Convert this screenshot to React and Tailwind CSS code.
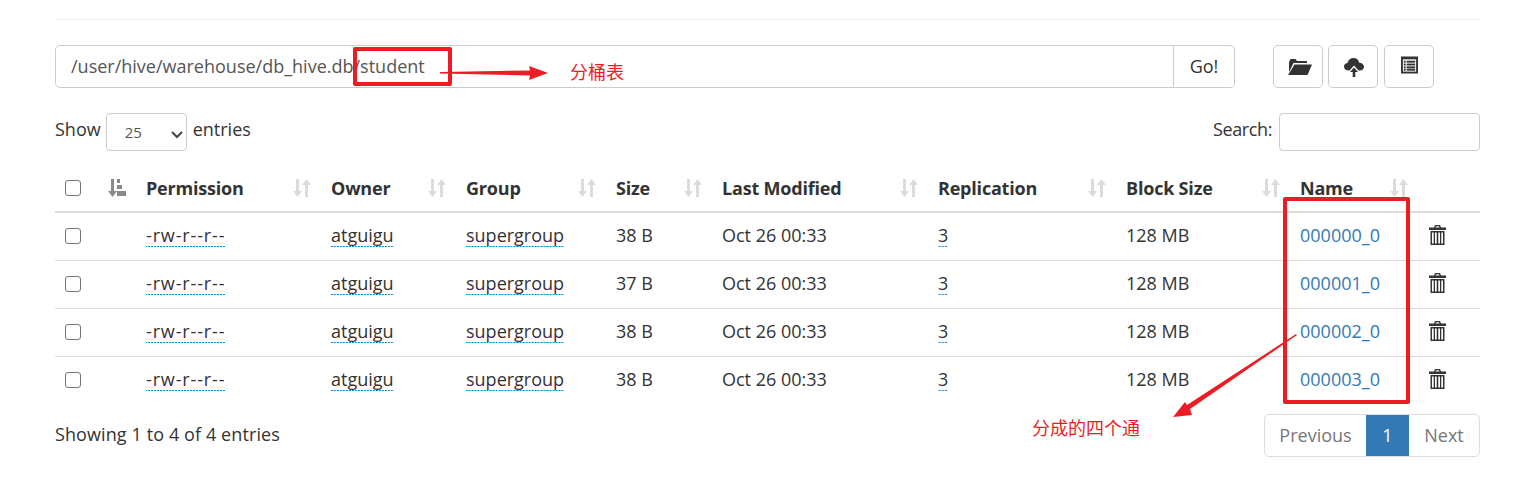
const FONT = "font-['Open_Sans','Noto_Sans_CJK_SC',sans-serif]";

const rows = [
  { size: "38 B", name: "000000_0" },
  { size: "37 B", name: "000001_0" },
  { size: "38 B", name: "000002_0" },
  { size: "38 B", name: "000003_0" },
];

const columns = [
  { label: "Permission", width: "w-[185px]" },
  { label: "Owner", width: "w-[135px]" },
  { label: "Group", width: "w-[150px]" },
  { label: "Size", width: "w-[106px]" },
  { label: "Last Modified", width: "w-[216px]" },
  { label: "Replication", width: "w-[188px]" },
  { label: "Block Size", width: "w-[174px]" },
  { label: "Name", width: "w-[128px]" },
];

function SortIcon({ className = "text-[#dcdcdc]" }) {
  return (
    <svg width="18" height="20" viewBox="0 0 18 20" className={className} fill="currentColor">
      <path d="M3 1h3v12h3l-4.500 6L0 13h3z" />
      <path d="M12 19h3V7h3l-4.500-6L9 7h3z" />
    </svg>
  );
}

function SortAttrIcon() {
  return (
    <svg width="18" height="20" viewBox="0 0 18 20" className="text-[#8a8a8a]" fill="currentColor">
      <path d="M3 1h3v12h3l-4.500 6L0 13h3z" />
      <rect x="9" y="1" width="3" height="4" />
      <rect x="9" y="7" width="5" height="4" />
      <rect x="9" y="13" width="9" height="5" />
    </svg>
  );
}

function FolderIcon() {
  return (
    <svg width="24" height="18" viewBox="0 0 24 18" fill="#333" className="ml-[3px]">
      <path d="M1 4 2.500 1h5L9 3h10v2H5.500L1 14z" />
      <path d="M6.500 6.500H24L19.500 17H0z" />
    </svg>
  );
}

function CloudUploadIcon() {
  return (
    <svg width="20" height="20" viewBox="0 0 20 20" fill="#333" className="ml-px">
      <path d="M5 13.500C2 13.500 0 12 0 9.500 0 7.300 1.700 6 3.500 6 4.300 2.800 6.700 1 9.500 1c3 0 5.200 2 5.800 4.800 2.700 0 4.700 1.700 4.700 4 0 2.300-1.800 3.700-4.300 3.700h-1.200L10 8.500 5.500 13.500z" />
      <path d="M10 10.500 14 15h-2.700v5H8.700v-5H6z" />
    </svg>
  );
}

function ListIcon() {
  return (
    <svg width="17" height="18" viewBox="0 0 18 18" className="ml-px -mt-[3px]">
      <rect x="0" y="0" width="18" height="18" fill="#333" />
      <rect x="2" y="3" width="14" height="13" fill="#fff" />
      <g fill="#333">
        <rect x="3" y="4.500" width="2" height="2" />
        <rect x="6" y="4.500" width="9" height="2" />
        <rect x="3" y="7.500" width="2" height="2" />
        <rect x="6" y="7.500" width="9" height="2" />
        <rect x="3" y="10.500" width="2" height="2" />
        <rect x="6" y="10.500" width="9" height="2" />
        <rect x="3" y="13" width="2" height="2" />
        <rect x="6" y="13" width="9" height="2" />
      </g>
    </svg>
  );
}

function TrashIcon() {
  return (
    <svg width="17" height="20" viewBox="0 0 17 20" fill="#333" className="ml-px -mt-[3px]">
      <path d="M6 0h5l1 2.500h5V5H0V2.500h5zM7 1.200 6.500 2.500h4L10 1.200z" />
      <path d="M1.500 6h14v14h-14zM3 7.500v11h1.700v-11zM6 7.500v11h1.700v-11zM9.300 7.500v11H11v-11zM12.300 7.500v11H14v-11z" fillRule="evenodd" />
    </svg>
  );
}

function Check() {
  return <span className="block w-4 h-4 rounded-[3px] border border-[#767676] bg-white" />;
}

function Dotted({ children, className = "" }) {
  return (
    <span className={`bg-[linear-gradient(to_right,#0088cc_67%,transparent_67%)] bg-[length:3px_1px] bg-repeat-x bg-bottom ${className}`}>
      {children}
    </span>
  );
}

function IconButton({ children }) {
  return (
    <button className="w-[50px] h-[43px] flex items-center justify-center border border-[#cccccc] rounded-[5px] bg-white">
      {children}
    </button>
  );
}

export default function App() {
  return (
    <div className={`relative h-[485px] overflow-hidden bg-white pl-[55px] pr-[37px] pt-[19px] text-[18px] leading-[26px] text-[#333] ${FONT}`}>
      <div className="border-t border-[#eeeeee]" />

      <div className="mt-[25px] flex items-start">
        <div className="flex w-[1180px] h-[43px]">
          <div className="flex-1 flex items-center pl-[15px] pb-[2px] border border-[#cccccc] rounded-l-[5px] text-[#555]">
            /user/hive/warehouse/db_hive.db/student
          </div>
          <button className="w-[61px] pb-[2px] border border-l-0 border-[#cccccc] rounded-r-[5px]">Go!</button>
        </div>
        <div className="flex ml-[38px]">
          <IconButton><FolderIcon /></IconButton>
          <div className="ml-[5px]"><IconButton><CloudUploadIcon /></IconButton></div>
          <div className="ml-[6px]"><IconButton><ListIcon /></IconButton></div>
        </div>
      </div>

      <div className="mt-[25px] flex items-center justify-between h-[38px]">
        <div className="flex items-center gap-[5px]">
          <span className="-mt-[6px]">Show</span>
          <div className="relative w-[81px] h-[38px] flex items-center pl-[18px] border border-[#cccccc] rounded-[4px] text-[15px] text-[#555]">
            25
            <svg width="12" height="8" viewBox="0 0 12 8" className="absolute right-[3px] top-[17px]" fill="none" stroke="#444" strokeWidth="2">
              <path d="M1 1l5 5 5-5" />
            </svg>
          </div>
          <span className="-mt-[6px] ml-px">entries</span>
        </div>
        <div className="flex items-center gap-[7px]">
          <span className="-mt-[6px] tracking-[-0.4px]">Search:</span>
          <div className="w-[201px] h-[38px] border border-[#cccccc] rounded-[4px]" />
        </div>
      </div>

      <table className="mt-[14px] w-[1425px] table-fixed border-collapse">
        <thead>
          <tr className="h-[47px] border-b-2 border-[#dddddd]">
            <th className="w-[43px] pl-[10px] text-left align-middle"><Check /></th>
            <th className="w-[38px] pl-[10px] text-left align-middle"><SortAttrIcon /></th>
            {columns.map((col) => (
              <th key={col.label} className={`${col.width} pl-[10px] pr-[10px] text-left font-bold`}>
                <div className="flex items-center justify-between">
                  <span className="tracking-[-0.2px]">{col.label}</span>
                  <SortIcon />
                </div>
              </th>
            ))}
            <th className="w-[62px]" />
          </tr>
        </thead>
        <tbody>
          {rows.map((row) => (
            <tr key={row.name} className="h-[48px] border-b border-[#dddddd] last:border-b-0">
              <td className="pl-[10px]"><Check /></td>
              <td />
              <td className="pl-[10px] pb-[2px]"><Dotted className="tracking-[0.85px]">-rw-r--r--</Dotted></td>
              <td className="pl-[10px] pb-[2px]"><Dotted>atguigu</Dotted></td>
              <td className="pl-[10px] pb-[2px]"><Dotted>supergroup</Dotted></td>
              <td className="pl-[10px] pb-[2px]">{row.size}</td>
              <td className="pl-[10px] pb-[2px]">Oct 26 00:33</td>
              <td className="pl-[10px] pb-[2px]"><Dotted>3</Dotted></td>
              <td className="pl-[10px] pb-[2px]">128 MB</td>
              <td className="pl-[10px] pb-[2px] text-[#337ab7]">{row.name}</td>
              <td className="pl-[10px]"><TrashIcon /></td>
            </tr>
          ))}
        </tbody>
      </table>

      <div className="mt-[10px] flex items-start justify-between">
        <div className="mt-[7px] tracking-[0.1px]">Showing 1 to 4 of 4 entries</div>
        <div className="flex h-[43px] items-stretch border border-[#dddddd] rounded-[5px] overflow-hidden text-[#777]">
          <span className="w-[101px] flex items-center justify-center pb-px">Previous</span>
          <span className="w-[43px] flex items-center justify-center pb-px bg-[#337ab7] text-white">1</span>
          <span className="w-[70px] flex items-center justify-center pb-px">Next</span>
        </div>
      </div>

      {/* hand drawn annotations on top of the page */}
      <div className="absolute left-[353px] top-[47px] w-[99px] h-[39px] border-[4px] border-[#ed1c24] rounded-[2px]" />
      <div className="absolute left-[1283px] top-[197px] w-[127px] h-[207px] border-[4px] border-[#ed1c24] rounded-[2px]" />
      <span className="absolute left-[570px] top-[58px] text-[#ed1c24] text-[18px] font-['Noto_Sans_CJK_SC',sans-serif]">分桶表</span>
      <span className="absolute left-[1032px] top-[414px] text-[#ed1c24] text-[18px] font-['Noto_Sans_CJK_SC',sans-serif]">分成的四个通</span>
      <svg width="1517" height="485" className="absolute left-0 top-0 pointer-events-none" fill="#ed1c24">
        <path d="M440 72 L530 70.500 L529 66 L548 73 L529 80 L530 75.500 L440 73.500z" />
        <path d="M1297 335 L1190 409 L1192 415 L1173 417 L1185 402 L1187 405 L1296 334z" />
      </svg>
    </div>
  );
}
